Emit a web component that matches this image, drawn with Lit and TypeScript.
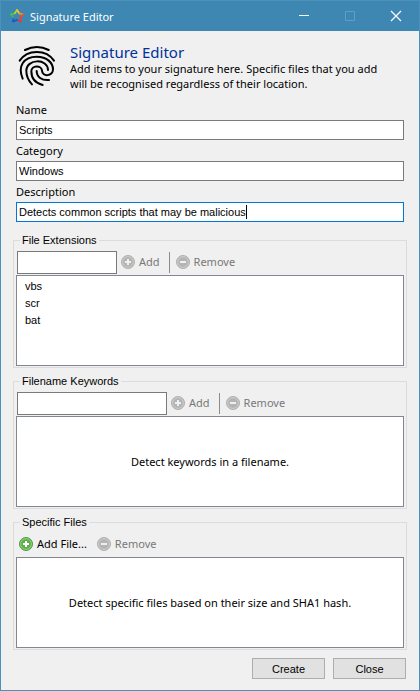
import { LitElement, html, css, svg } from "lit";
import { customElement, state } from "lit/decorators.js";

const badge = (kind: "plus" | "minus", on = false) => html`
  <svg class="badge" viewBox="0 0 14 14" aria-hidden="true">
    <circle cx="7" cy="7" r="6.5" fill=${on ? "#5fae4c" : "#b4b4b4"} stroke=${on ? "#4f9a45" : "#b0b0b0"} />
    <circle cx="7" cy="7" r="5.4" fill="none" stroke=${on ? "#9bd78a" : "#d0d0d0"} stroke-width="0.9" />
    <path d=${kind === "plus" ? "M7 4v6M4 7h6" : "M4 7h6"} stroke=${on ? "#fff" : "#f0f0f0"} stroke-width="2" />
  </svg>`;

const starColours = ["#f4cc30", "#f0952c", "#e8502c", "#e8443a", "#dc3c3c", "#1f55c4", "#1f58c8", "#3fb080", "#4fc443", "#b8cc38"];
const starPoints = [...Array(10).keys()].map((i) => {
  const a = (-90 + i * 36) * (Math.PI / 180);
  const r = i % 2 ? 3.7 : 6.3;
  return [7 + r * Math.cos(a), 7.3 + r * Math.sin(a)];
});

@customElement("app-root")
export class AppRoot extends LitElement {
  static styles = css`
    * { box-sizing: border-box; }
    :host {
      display: flex;
      flex-direction: column;
      min-height: 100vh;
      box-sizing: border-box;
      border: 1px solid #4a91bc;
      border-top-width: 0;
      background: #f0f0f0;
      color: #000;
      font: 11px/15px "Noto Sans", "Open Sans", sans-serif;
    }
    button, input { font: inherit; color: inherit; border-radius: 0; margin: 0; }
    .titlebar {
      display: flex;
      align-items: center;
      height: 31px;
      padding-left: 9px;
      background: #3e87b3;
      border-top: 1px solid #4a91bc;
      color: #fff;
    }
    .star { width: 14px; height: 14px; margin-right: 6px; }
    .caption { flex: 1; }
    .winbtn {
      width: 46px;
      height: 30px;
      padding: 0;
      border: 0;
      background: none;
      display: grid;
      place-items: center;
    }
    .winbtn svg { width: 12px; height: 12px; fill: none; stroke: #fff; }
    .winbtn:disabled svg { stroke: #5f9fc6; }
    .body { padding: 12px 12px 11px; }
    .header { display: flex; padding: 0 2px 0 4px; gap: 13px; }
    .print { width: 40px; height: 44px; margin-top: 2px; flex: none; }
    h1 { margin: 0; font-size: 15px; line-height: 18px; font-weight: 400; color: #003399; }
    .header p { margin: 0; }
    .form { padding: 11px 3px 2px; }
    .form label { display: block; line-height: 15px; margin-bottom: 3px; }
    .form input {
      display: block;
      width: 100%;
      height: 20px;
      margin-bottom: 3px;
    }
    input {
      border: 1px solid #7a7a7a;
      background: #fff;
      padding: 0 2px;
      outline: none;
      font: 11px/14px "Liberation Sans", Arial, sans-serif;
    }
    .field { position: relative; }
    .form .focus { border-color: #0078d7; caret-color: transparent; }
    .caret {
      position: absolute;
      top: 3px;
      width: 1px;
      height: 14px;
      background: #000;
    }
    .group {
      margin: 7px 0 0;
      padding: 3px 2px 1px;
      border: 1px solid #dcdcdc;
      min-width: 0;
    }
    legend {
      margin-left: 4px;
      padding: 0 2px;
      font: 11px/13px "Liberation Sans", Arial, sans-serif;
    }
    .tools { display: flex; align-items: center; height: 25px; }
    .tools input { height: 23px; margin: 0 4px 0 1px; }
    .short { width: 100px; }
    .long { width: 150px; }
    .tool {
      display: flex;
      align-items: center;
      gap: 4px;
      padding: 0 0 2px;
      border: 0;
      background: none;
    }
    .tool:disabled { color: #787878; }
    .badge { width: 14px; height: 14px; }
    .sep { width: 1px; height: 21px; margin: 0 6px 0 9px; background: #8c8c8c; }
    .first { margin: 0 10px 0 3px; }
    .list {
      height: 91px;
      margin: 0;
      padding: 2px 8px;
      border: 1px solid #828790;
      background: #fff;
      list-style: none;
      font: 11px/17px "Liberation Sans", Arial, sans-serif;
    }
    .empty {
      display: grid;
      place-items: center;
      font: 11px/15px "Noto Sans", "Open Sans", sans-serif;
    }
    .actions { display: flex; justify-content: flex-end; gap: 8px; padding: 8px 1px 0 0; }
    .action {
      width: 73px;
      height: 21px;
      padding: 0;
      border: 1px solid #adadad;
      background: #e1e1e1;
      font: 11px/14px "Liberation Sans", Arial, sans-serif;
    }
  `;

  @state() private description = "Detects common scripts that may be malicious";
  @state() private caretX = 0;

  private measure(field: HTMLInputElement) {
    const context = document.createElement("canvas").getContext("2d")!;
    const style = getComputedStyle(field);
    context.font = `${style.fontSize} ${style.fontFamily}`;
    const end = field.selectionEnd ?? field.value.length;
    this.caretX = 3 + Math.round(context.measureText(field.value.slice(0, end)).width);
  }

  private moved = (event: Event) => {
    const field = event.currentTarget as HTMLInputElement;
    this.description = field.value;
    this.measure(field);
  };

  firstUpdated() {
    const field = this.renderRoot.querySelector<HTMLInputElement>("#description")!;
    field.focus();
    field.setSelectionRange(field.value.length, field.value.length);
    this.measure(field);
  }

  render() {
    return html`
      <header class="titlebar">
        <svg class="star" viewBox="0 0 14 14" aria-hidden="true">
          ${starPoints.map(([x, y], i) => {
            const [nx, ny] = starPoints[(i + 1) % 10];
            return svg`<line x1=${x} y1=${y} x2=${nx} y2=${ny} stroke=${starColours[i]} stroke-width="1.8" stroke-linecap="round" />`;
          })}
        </svg>
        <span class="caption">Signature Editor</span>
        <button class="winbtn" aria-label="Minimize"><svg viewBox="0 0 12 12"><path d="M1 5.5h10" /></svg></button>
        <button class="winbtn" aria-label="Maximize" disabled><svg viewBox="0 0 12 12"><path d="M1.5 1.5h9v9h-9z" /></svg></button>
        <button class="winbtn" aria-label="Close window"><svg viewBox="0 0 12 12"><path d="M1 1l10 10M11 1L1 11" stroke-width="1.2" /></svg></button>
      </header>
      <main class="body">
        <div class="header">
          <svg class="print" viewBox="10 6 120 132" fill="none" stroke="#000" stroke-width="6" stroke-linecap="round" aria-hidden="true">
            <path d="M34 21Q70 3 105 21" />
            <path d="M18 53C41 18 98 18 121 53" />
            <path d="M27 107C11 70 30 41 69 41C100 41 118 60 118 79C118 100 86 103 85 83C84 66 53 66 53 85C53 108 67 121 87 126" />
            <path d="M55 124C41 109 38 98 38 84C38 46 103 46 103 81" />
            <path d="M69 84C69 102 84 113 106 111" />
          </svg>
          <div>
            <h1>Signature Editor</h1>
            <p>Add items to your signature here. Specific files that you add<br />will be recognised regardless of their location.</p>
          </div>
        </div>
        <div class="form">
          <label for="name">Name</label>
          <input id="name" value="Scripts" />
          <label for="category">Category</label>
          <input id="category" value="Windows" />
          <label for="description">Description</label>
          <div class="field">
            <input id="description" class="focus" .value=${this.description}
              @input=${this.moved} @keyup=${this.moved} @click=${this.moved} />
            <span class="caret" style="left:${this.caretX}px"></span>
          </div>
        </div>
        <fieldset class="group">
          <legend>File Extensions</legend>
          <div class="tools">
            <input class="short" aria-label="File extension" />
            <button class="tool" disabled>${badge("plus")}Add</button>
            <span class="sep"></span>
            <button class="tool" disabled>${badge("minus")}Remove</button>
          </div>
          <ul class="list"><li>vbs</li><li>scr</li><li>bat</li></ul>
        </fieldset>
        <fieldset class="group">
          <legend>Filename Keywords</legend>
          <div class="tools">
            <input class="long" aria-label="Filename keyword" />
            <button class="tool" disabled>${badge("plus")}Add</button>
            <span class="sep"></span>
            <button class="tool" disabled>${badge("minus")}Remove</button>
          </div>
          <div class="list empty">Detect keywords in a filename.</div>
        </fieldset>
        <fieldset class="group">
          <legend>Specific Files</legend>
          <div class="tools">
            <button class="tool first">${badge("plus", true)}Add File...</button>
            <button class="tool" disabled>${badge("minus")}Remove</button>
          </div>
          <div class="list empty">Detect specific files based on their size and SHA1 hash.</div>
        </fieldset>
        <div class="actions">
          <button class="action">Create</button>
          <button class="action">Close</button>
        </div>
      </main>
    `;
  }
}
